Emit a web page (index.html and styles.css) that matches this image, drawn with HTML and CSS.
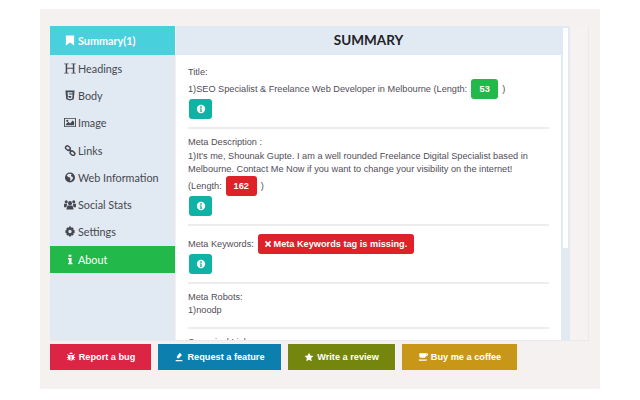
FILE: index.html
```html
<!DOCTYPE html>
<html lang="en">
<head>
<meta charset="utf-8">
<title>Summary</title>
<link rel="stylesheet" href="styles.css">
</head>
<body>
<div class="page">
  <div class="panel">
    <nav class="side">
      <a class="item active"><svg class="ic" viewBox="0 0 13 12"><path d="M2 .5h9v11L6.500 8.200 2 11.500z"/></svg>Summary(1)</a>
      <a class="item"><svg class="ic" viewBox="0 0 13 12"><path d="M.3.5h4.700v.8H3.400v3.900h6.200V1.300H8V.5h4.700v.8h-1.500v9.400h1.500v.8H8v-.8h1.600V6.200H3.400v4.500H5v.8H.3v-.8h1.500V1.300H.3z"/></svg>Headings</a>
      <a class="item"><svg class="ic" viewBox="0 0 13 12"><path fill-rule="evenodd" d="M1.500.5h10l-.9 9.500-4.100 1.500L2.400 10zM3.800 2.500l.4 4h3.700l-.1 1.600-1.300.5-1.300-.5-.1-.9H3.900l.2 2 2.400.9 2.400-.9.400-4.400H5.300l-.1-1h4l.1-1.300z"/></svg>Body</a>
      <a class="item"><svg class="ic" viewBox="0 0 13 12"><path fill-rule="evenodd" d="M0 1h13v10H0zM1 2v8h11V2zM2 9V8l2.800-2.800L6.500 7l3-3.200L11 5.300V9zM3.500 3a1.200 1.200 0 1 1 0 2.400 1.200 1.200 0 0 1 0-2.400z"/></svg>Image</a>
      <a class="item"><svg class="ic" viewBox="0 0 13 12"><g fill="none" stroke="currentColor" stroke-width="1.600"><rect x="1.500" y="1.500" width="5.500" height="3.800" rx="1.900" transform="rotate(40 4.200 3.400)"/><rect x="6.500" y="7" width="5.500" height="3.800" rx="1.900" transform="rotate(40 9.200 8.900)"/><path d="M5 4.500l3 3"/></g></svg>Links</a>
      <a class="item"><svg class="ic" viewBox="0 0 13 12"><path fill-rule="evenodd" d="M6.500.5a5.500 5.500 0 1 1 0 11 5.500 5.500 0 0 1 0-11zM4.500 2.200L3 3.800 4.500 5.500l2 .5.500 1.500L6.500 9.800 8 9.300 9.600 7V5.500L8 5l-.5-1.500 1-1L6.500 1.800z"/></svg>Web Information</a>
      <a class="item"><svg class="ic" viewBox="0 0 13 12"><path d="M6.500 2.300a2.200 2.200 0 1 1 0 4.400 2.200 2.200 0 0 1 0-4.400zM2.400 1.300a1.700 1.700 0 1 1 0 3.400 1.700 1.700 0 0 1 0-3.400zM10.600 1.300a1.700 1.700 0 1 1 0 3.400 1.700 1.700 0 0 1 0-3.400zM3.800 7h5.400l1.300 4.500h-8zM0 5.300h3.300L2.700 9H0zM9.700 5.300H13V9h-2.700z"/></svg>Social Stats</a>
      <a class="item"><svg class="ic" viewBox="0 0 13 12"><path fill-rule="evenodd" d="M5.500.5h2l.3 1.500 1.100-.7 1.800 1.800-.7 1.100 1.500.3v3l-1.500.3.700 1.100-1.800 1.800-1.100-.7-.3 1.500h-2l-.3-1.500-1.100.7-1.800-1.800.7-1.100L1.500 7.500v-3L3 4.200l-.7-1.100 1.800-1.800 1.100.7zM6.500 4.200a1.800 1.800 0 1 0 0 3.600 1.800 1.800 0 0 0 0-3.600z"/></svg>Settings</a>
      <a class="item about"><svg class="ic" viewBox="0 0 13 12"><path d="M5 .8h3V3H5zM4.300 4.300h3.900v5.400h1v1.600H4.300V9.700h1V5.900h-1z"/></svg>About</a>
    </nav>
    <main class="main">
      <h1 class="head">SUMMARY</h1>
      <div class="body">
        <section class="sec">
          <p class="ln">Title:</p>
          <p class="row">1)SEO Specialist &amp; Freelance Web Developer in Melbourne (Length: <span class="badge green">53</span> )</p>
          <button class="info"><svg viewBox="0 0 12 12"><path fill-rule="evenodd" d="M6 1a5 5 0 1 1 0 10A5 5 0 0 1 6 1zM5 2.800v1.700h2V2.800zM4.500 5.300v1h.7v2h-.7v1h3v-1h-.7v-3z"/></svg></button>
        </section>
        <section class="sec">
          <p class="ln">Meta Description :</p>
          <p class="ln">1)It's me, Shounak Gupte. I am a well rounded Freelance Digital Specialist based in Melbourne. Contact Me Now if you want to change your visibility on the internet!</p>
          <p class="row">(Length: <span class="badge red num">162</span> )</p>
          <button class="info"><svg viewBox="0 0 12 12"><path fill-rule="evenodd" d="M6 1a5 5 0 1 1 0 10A5 5 0 0 1 6 1zM5 2.800v1.700h2V2.800zM4.500 5.300v1h.7v2h-.7v1h3v-1h-.7v-3z"/></svg></button>
        </section>
        <section class="sec">
          <p class="row">Meta Keywords: <span class="badge red wide"><svg class="x" viewBox="0 0 10 10"><path d="M1 2.500L2.500 1 5 3.500 7.500 1 9 2.500 6.500 5 9 7.500 7.500 9 5 6.500 2.500 9 1 7.500 3.500 5z"/></svg>Meta Keywords tag is missing.</span></p>
          <button class="info"><svg viewBox="0 0 12 12"><path fill-rule="evenodd" d="M6 1a5 5 0 1 1 0 10A5 5 0 0 1 6 1zM5 2.800v1.700h2V2.800zM4.500 5.300v1h.7v2h-.7v1h3v-1h-.7v-3z"/></svg></button>
        </section>
        <section class="sec tall">
          <p class="ln">Meta Robots:</p>
          <p class="ln">1)noodp</p>
        </section>
        <section class="sec">
          <p class="ln">Canonical Link:</p>
        </section>
      </div>
    </main>
    <div class="track"><div class="thumb"></div></div>
    <div class="gutter"></div>
  </div>
  <div class="actions">
    <a class="act bug"><svg viewBox="0 0 12 12"><path d="M4 2.500a2 2 0 0 1 4 0zM3 3.500h6l1-1 .7.700-1.200 1.300v1.800H11v1H9.500l-.1.600 1.300 1.300-.7.700L8.800 8.700C8.200 9.800 7 10.500 6.500 10.500v-6h-1v6c-.5 0-1.700-.7-2.300-1.800L2 9.900l-.7-.7 1.300-1.300-.1-.6H1v-1h1.500V4.500L1.300 3.200 2 2.500z"/></svg>Report a bug</a>
    <a class="act feature"><svg viewBox="0 0 12 12"><path d="M7 1l2.500 2.500L6 7.500H3.500V5zM2 9.500h8V11H2z"/></svg>Request a feature</a>
    <a class="act review"><svg viewBox="0 0 12 12"><path d="M6 .8l1.600 3.400 3.700.5-2.700 2.600.6 3.700L6 9.200 2.800 11l.6-3.700L.7 4.700l3.700-.5z"/></svg>Write a review</a>
    <a class="act coffee"><svg viewBox="0 0 12 12"><path fill-rule="evenodd" d="M1.500 1.500h9a1.500 1.500 0 0 1 1 2.700c-.5.500-1 .8-2 .8-.3 1.200-1 2-2 2H3.500c-1 0-2-1-2-2.500zM9.500 2.700V4c.8 0 1-.3 1-.7s-.3-.6-1-.6zM.5 9h10.500l-1 1.500H1.500z"/></svg>Buy me a coffee</a>
  </div>
</div>
</body>
</html>
```
FILE: styles.css
```css
* { box-sizing: border-box; }
html, body { margin: 0; padding: 0; background: #fff; }
body { width: 640px; height: 400px; overflow: hidden; }
.page {
  width: 560px;
  height: 380px;
  margin: 9px 0 0 40px;
  padding: 17px 0 0 10px;
  background: #f5f1f0;
  font-family: "Liberation Sans", Arial, sans-serif;
}
.panel {
  display: flex;
  width: 539px;
  height: 315px;
  border-right: 1px solid #ebe9ea;
  border-bottom: 1px solid #ebe9ea;
}
.side {
  flex: 0 0 125px;
  display: grid;
  grid-template-rows: 28.500px repeat(8, 27.300px) 1fr;
  background: #e1e9f3;
  font-family: Lato, sans-serif;
  font-size: 10.800px;
  color: #45484e;
}
.item { display: flex; align-items: center; padding-left: 14px; gap: 2px; }
.ic { flex: none; width: 12px; height: 11px; fill: currentColor; }
.active { background: #48d0dd; color: #fff; font-weight: 700; }
.about { background: #22b84a; color: #fff; }
.main { flex: 0 0 385px; height: 314px; margin-left: 1px; background: #fff; }
.head {
  margin: 0 -2px 0 0;
  height: 29px;
  padding-right: 2px;
  background: #e1e9f3;
  text-align: center;
  font: 700 13.500px/29px Lato, sans-serif;
  color: #1f2226;
}
.body {
  height: 285px;
  overflow: hidden;
  padding: 10.500px 12px 0 12px;
  font-size: 9.200px;
  color: #524d58;
}
.sec { border-bottom: 2px solid #eeeded; padding-bottom: 8px; margin-bottom: 7.500px; }
.tall { padding-bottom: 9px; }
.ln { margin: 0; line-height: 13.300px; }
.row {
  display: flex;
  align-items: center;
  gap: 4px;
  height: 20px;
  margin: 0;
}
.badge {
  height: 20px;
  border-radius: 3px;
  color: #fff;
  font-weight: 700;
  line-height: 20px;
  text-align: center;
}
.green { background: #22b84a; width: 27px; }
.red { background: #dd2229; }
.num { width: 31px; }
.wide { width: 156px; white-space: nowrap; }
.x { width: 8px; height: 8px; fill: #fff; margin-right: 1px; vertical-align: -1px; }
.info {
  display: flex;
  align-items: center;
  justify-content: center;
  width: 23px;
  height: 20px;
  margin-left: 1px;
  padding: 0;
  border: 0;
  border-radius: 3px;
  background: #0fb3a6;
}
.info svg { width: 10px; height: 10px; fill: #fff; }
.track { flex: 0 0 9px; background: #e1e9f3; padding: 2px 2px 0; }
.thumb { height: 220px; background: #fff; }
.gutter { flex: 1; background: #f6f2f1; }
.actions { display: flex; gap: 7px; margin-top: 3px; }
.act {
  display: flex;
  align-items: center;
  justify-content: center;
  gap: 3px;
  height: 26px;
  color: #fff;
  font-size: 9.200px;
  font-weight: 700;
}
.act svg { width: 10px; height: 10px; fill: #fff; }
.bug { width: 101px; background: #dc2544; }
.feature { width: 123px; background: #0c7fae; }
.review { width: 107px; background: #75860f; }
.coffee { width: 115px; background: #c99718; }
```
